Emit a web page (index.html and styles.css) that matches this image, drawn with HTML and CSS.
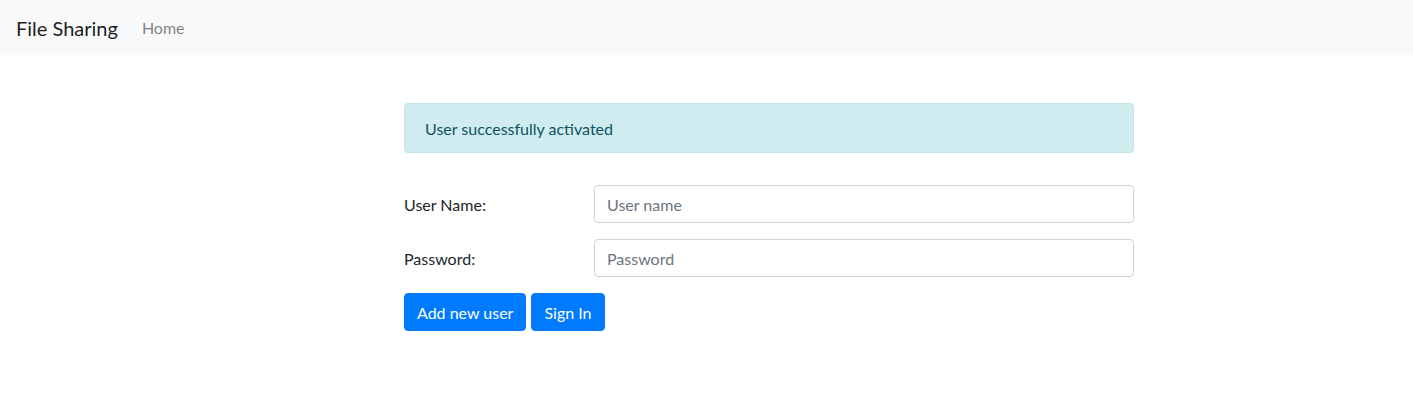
FILE: index.html
```html
<!DOCTYPE html>
<html lang="en">
<head>
<meta charset="utf-8">
<title>File Sharing</title>
<link rel="stylesheet" href="styles.css">
</head>
<body>
<nav class="navbar">
  <a class="brand" href="#">File Sharing</a>
  <a class="nav-link" href="#">Home</a>
</nav>
<main class="main">
  <div class="alert">User successfully activated</div>
  <form class="form">
    <div class="form-row">
      <label class="label" for="username">User Name:</label>
      <input class="input" id="username" type="text" placeholder="User name">
    </div>
    <div class="form-row">
      <label class="label" for="password">Password:</label>
      <input class="input" id="password" type="password" placeholder="Password">
    </div>
    <div class="buttons">
      <button class="btn" type="button">Add new user</button>
      <button class="btn" type="submit">Sign In</button>
    </div>
  </form>
</main>
</body>
</html>
```
FILE: styles.css
```css
* { box-sizing: border-box; }
html, body { margin: 0; padding: 0; }
body {
  font-family: "Lato", "Liberation Sans", sans-serif;
  font-size: 16px;
  line-height: 1.5;
  color: #212529;
  background: #fff;
}
.navbar {
  display: flex;
  align-items: center;
  height: 55px;
  padding: 0 16px;
  background: #f8f9fa;
}
.brand {
  font-size: 20px;
  color: rgba(0,0,0,.9);
  text-decoration: none;
  margin-right: 16px;
  line-height: 30px;
}
.nav-link {
  color: rgba(0,0,0,.5);
  text-decoration: none;
  padding: 8px;
}
.main {
  margin-left: 404px;
  width: 730px;
  padding-top: 48px;
}
.alert {
  padding: 13px 20px 11px;
  border: 1px solid #bee5eb;
  border-radius: 4px;
  background: #d1ecf1;
  color: #0c5460;
  margin-bottom: 32px;
}
.form-row {
  display: grid;
  grid-template-columns: 190px 1fr;
  align-items: center;
  margin-bottom: 16px;
}
.label { color: #212529; padding-top: 2px; }
.input {
  height: 38px;
  padding: 6px 12px;
  font: inherit;
  color: #495057;
  border: 1px solid #ced4da;
  border-radius: 4px;
  background: #fff;
  width: 100%;
}
.input::placeholder { color: #6c757d; opacity: 1; }
.buttons { display: flex; gap: 5px; }
.btn {
  font: inherit;
  color: #fff;
  background: #007bff;
  border: 1px solid #007bff;
  border-radius: 4px;
  padding: 7px 12px 5px;
  height: 38px;
  cursor: pointer;
}
```
